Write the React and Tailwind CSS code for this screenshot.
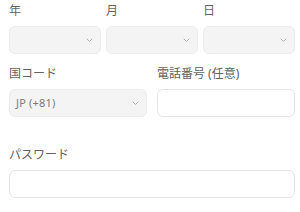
import React from "react";

function Chevron() {
  return (
    <svg width="7" height="5" viewBox="0 0 7 5" fill="none" className="shrink-0">
      <path d="M1 1l2.5 2.5L6 1" stroke="#b0b0b0" strokeWidth="1" strokeLinecap="round" strokeLinejoin="round" />
    </svg>
  );
}

function SelectBox({ value }) {
  return (
    <div className="h-[28px] rounded-[6px] border border-[#ececec] bg-[#f4f4f4] flex items-center justify-between pl-[6px] pr-[7px]">
      <span className="text-[11px] tracking-[0.2px] text-[#7a7a7a]">{value}</span>
      <Chevron />
    </div>
  );
}

function Label({ children }) {
  return <div className="text-[12px] leading-[16px] text-[#626262] mb-[7px]">{children}</div>;
}

export default function App() {
  return (
    <div
      className="w-[300px] h-[212px] bg-white pl-[9px] pr-[5px] pt-[3px] overflow-hidden"
      style={{ fontFamily: '"Noto Sans", "Noto Sans CJK JP", sans-serif' }}
    >
      <div className="grid grid-cols-3 gap-[5px]">
        <div>
          <Label>年</Label>
          <SelectBox value="" />
        </div>
        <div>
          <Label>月</Label>
          <SelectBox value="" />
        </div>
        <div>
          <Label>日</Label>
          <SelectBox value="" />
        </div>
      </div>

      <div className="grid grid-cols-2 gap-[10px] mt-[12px]">
        <div>
          <Label>国コード</Label>
          <SelectBox value="JP (+81)" />
        </div>
        <div>
          <Label>電話番号 (任意)</Label>
          <div className="h-[28px] rounded-[6px] border border-[#e6e6e6] bg-white" />
        </div>
      </div>

      <div className="mt-[30px]">
        <Label>パスワード</Label>
        <div className="h-[28px] rounded-[6px] border border-[#e6e6e6] bg-white" />
      </div>
    </div>
  );
}
